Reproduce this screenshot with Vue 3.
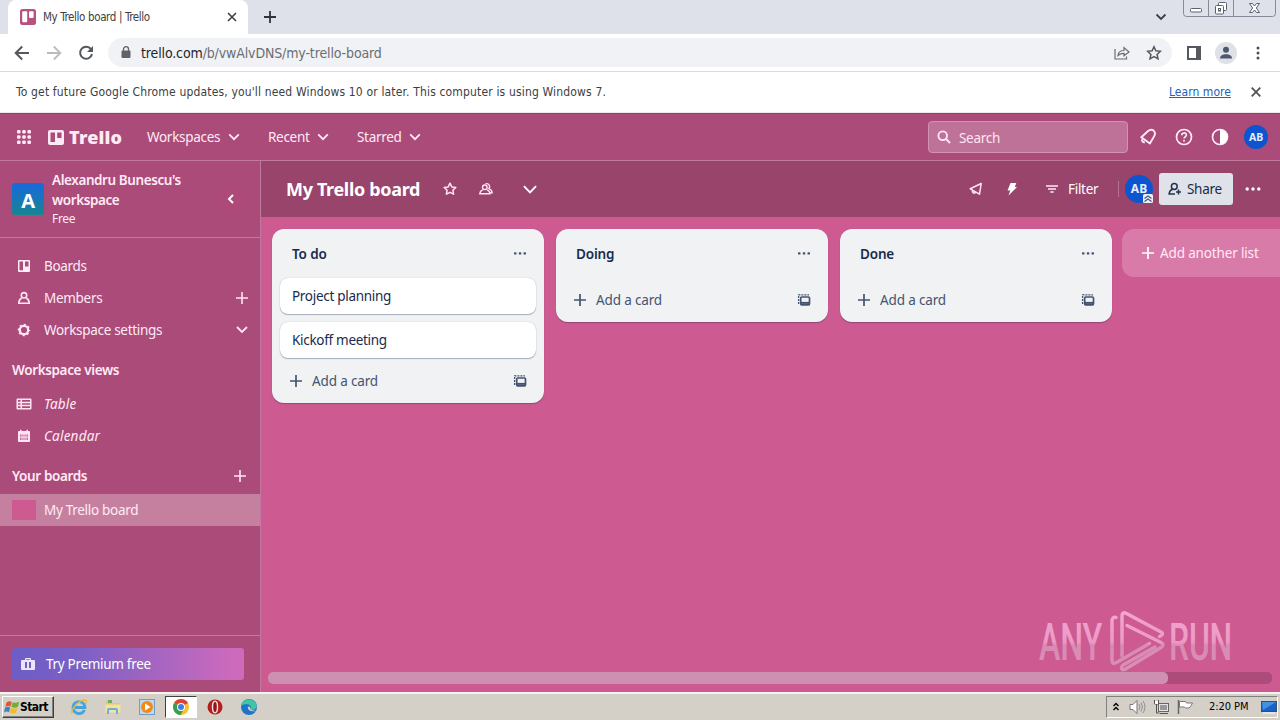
<script setup>
import { ref } from 'vue'

const boardName = ref('My Trello board')
const search = ref('')

const menus = ref([
    { name: 'Workspaces', cls: 'm-work' },
    { name: 'Recent', cls: 'm-recent' },
    { name: 'Starred', cls: 'm-starred' }
])

const lists = ref([
    { name: 'To do', cards: ['Project planning', 'Kickoff meeting'] },
    { name: 'Doing', cards: [] },
    { name: 'Done', cards: [] }
])
</script>

<template>
    <div class="screen">
        <!-- browser tabs -->
        <div class="tabstrip">
            <div class="tab">
                <svg class="favicon" width="16" height="16" viewBox="0 0 16 16">
                    <rect width="16" height="16" rx="2.5" fill="#b5527f" />
                    <rect x="2.2" y="2.2" width="5" height="11" rx="1" fill="#fff" />
                    <rect x="9" y="2.2" width="4.6" height="6.8" rx="1" fill="#fff" />
                </svg>
                <span class="tab-title">{{ boardName }} | Trello</span>
                <svg width="10" height="10" viewBox="0 0 10 10" class="tab-close"><path d="M1 1l8 8M9 1l-8 8" stroke="#3c4043" stroke-width="1.6" /></svg>
            </div>
            <svg class="new-tab" width="12" height="12" viewBox="0 0 12 12"><path d="M6 0v12M0 6h12" stroke="#30343a" stroke-width="1.8" /></svg>
            <svg class="tab-search" width="12" height="8" viewBox="0 0 12 8"><path d="M1.5 1.5L6 6l4.500-4.500" fill="none" stroke="#3c4043" stroke-width="1.8" /></svg>
            <svg class="win-buttons" width="94" height="18" viewBox="0 0 94 18">
                <path d="M.5 0v13.500q0 3 3 3h86q3 0 3-3V0M25.500 0v16M50.500 0v16" fill="none" stroke="#858b98" />
                <rect x="7.500" y="8.500" width="11" height="3.500" rx="1" fill="#fff" stroke="#5c606b" />
                <rect x="35.500" y="2.500" width="8" height="8" rx="1" fill="#fff" stroke="#5c606b" />
                <rect x="32.500" y="5.500" width="8" height="8.500" rx="1" fill="#fff" stroke="#5c606b" />
                <rect x="35.500" y="8.500" width="2" height="2.500" fill="none" stroke="#5c606b" />
                <path d="M66.500 3.500h3l2 2.500 2-2.500h3l-3.200 4.500 3.200 4.500h-3l-2-2.500-2 2.500h-3l3.200-4.500z" fill="#fff" stroke="#5c606b" />
            </svg>
        </div>

        <!-- address bar -->
        <div class="toolbar">
            <svg class="nav-back" width="16" height="16" viewBox="0 0 16 16"><path d="M15 8H2M8.200 1.500L1.700 8l6.500 6.500" fill="none" stroke="#55595e" stroke-width="2" /></svg>
            <svg class="nav-fwd" width="16" height="16" viewBox="0 0 16 16"><path d="M1 8h13M7.800 1.500L14.300 8l-6.500 6.500" fill="none" stroke="#b9bbbe" stroke-width="1.800" /></svg>
            <svg class="nav-reload" width="16" height="16" viewBox="0 0 16 16"><path d="M13 4.200A6 6 0 1 0 14 9" fill="none" stroke="#55595e" stroke-width="2" /><path d="M15 1v6H9z" fill="#55595e" /></svg>
            <div class="omnibox">
                <svg width="10" height="13" viewBox="0 0 10 13"><rect x="0.500" y="4.500" width="9" height="7.500" rx="1" fill="#5f6368" /><path d="M2.500 5V3.200a2.500 2.500 0 0 1 5 0V5" fill="none" stroke="#5f6368" stroke-width="1.300" /></svg>
                <span class="url"><b>trello.com</b>/b/vwAlvDNS/my-trello-board</span>
                <svg class="share-page" width="16" height="14" viewBox="0 0 16 14"><path d="M1 3v10h11.500v-2.500M4 9.500c.3-3 2.500-5 6-5V1.500l5 4.500-5 3.800V7.300C7.500 7.200 5.500 8 4 9.500z" fill="none" stroke="#6a6e73" stroke-width="1.200" /></svg>
                <svg class="bookmark" width="16" height="16" viewBox="0 0 16 16"><path d="M8 1.700l1.900 4.100 4.500.5-3.300 3.100.9 4.500L8 11.600l-4 2.300.9-4.500-3.300-3.100 4.500-.5z" fill="none" stroke="#55595e" stroke-width="1.500" /></svg>
            </div>
            <svg class="side-panel" width="14" height="14" viewBox="0 0 14 14"><path d="M0 0h14v14H0zM2 2v10h7V2z" fill="#55595e" fill-rule="evenodd" /></svg>
            <svg class="profile" width="22" height="22" viewBox="0 0 22 22"><circle cx="11" cy="11" r="11" fill="#dee1e6" /><circle cx="11" cy="7.800" r="3" fill="#4d5773" /><path d="M5 16.500c0-3 3-4.300 6-4.300s6 1.300 6 4.300z" fill="#4d5773" /></svg>
            <svg class="kebab" width="4" height="14" viewBox="0 0 4 14"><g fill="#4b4f54"><circle cx="2" cy="2" r="1.500" /><circle cx="2" cy="7" r="1.500" /><circle cx="2" cy="12" r="1.500" /></g></svg>
        </div>

        <div class="infobar">
            <span class="info-text">To get future Google Chrome updates, you'll need Windows 10 or later. This computer is using Windows 7.</span>
            <a class="learn">Learn more</a>
            <svg width="10" height="10" viewBox="0 0 10 10"><path d="M.7.700l8.600 8.600M9.300.7L.7 9.300" stroke="#505458" stroke-width="1.800" /></svg>
        </div>

        <!-- trello header -->
        <header class="header">
            <svg class="apps" width="14" height="14" viewBox="0 0 14 14" fill="#ffeaf6">
                <template v-for="r in 3"><rect v-for="c in 3" :key="r + '-' + c" :x="(c - 1) * 5.2" :y="(r - 1) * 5.2" width="3.600" height="3.600" rx="1.100" /></template>
            </svg>
            <div class="logo">
                <svg width="16" height="15" viewBox="0 0 16 15"><path fill="#ffeaf6" fill-rule="evenodd" d="M2 0h12a2 2 0 0 1 2 2v11a2 2 0 0 1-2 2H2a2 2 0 0 1-2-2V2a2 2 0 0 1 2-2zM2.500 2.500v9.500H7V2.500zM9.200 2.500V8h4.300V2.500z" /></svg>
                <span>Trello</span>
            </div>
            <div v-for="m in menus" :key="m.name" class="menu" :class="m.cls">
                <span>{{ m.name }}</span>
                <svg width="12" height="8" viewBox="0 0 12 8"><path d="M1.200 1.300L6 6.200l4.800-4.900" /></svg>
            </div>
            <div class="search">
                <svg width="14" height="14" viewBox="0 0 14 14"><circle cx="5.700" cy="5.700" r="4.300" fill="none" stroke="#ffe5f3" stroke-width="1.900" /><path d="M9 9l4 4" stroke="#ffe5f3" stroke-width="2" /></svg>
                <input v-model="search" type="text" placeholder="Search" />
            </div>
            <svg class="bell" width="18" height="18" viewBox="0 0 18 18"><path d="M2.300 9.300L8.800 3.200q3-2.700 5.800-.600 2.400 2.300.6 5.500L10.900 15.500zM3 11.300q-.3 2.700 2.800 3.200" fill="none" stroke="#ffeaf6" stroke-width="1.900" stroke-linejoin="round" /></svg>
            <svg class="help" width="18" height="18" viewBox="0 0 18 18"><circle cx="9" cy="9" r="7.500" fill="none" stroke="#ffeaf6" stroke-width="1.700" /><path d="M6.700 7.200c0-3 4.700-3 4.700-.2 0 1.800-2.300 1.700-2.300 3.600" fill="none" stroke="#ffeaf6" stroke-width="1.600" /><circle cx="9" cy="12.700" r="1" fill="#ffeaf6" /></svg>
            <svg class="theme" width="18" height="18" viewBox="0 0 18 18"><circle cx="9" cy="9" r="7.500" fill="none" stroke="#ffeaf6" stroke-width="1.700" /><path d="M9 1.500a7.500 7.500 0 0 1 0 15z" fill="#fff" /></svg>
            <div class="avatar small">AB</div>
        </header>

        <div class="main">
            <aside class="sidebar">
                <div class="workspace">
                    <div class="ws-logo">A</div>
                    <div class="ws-name">
                        <b>Alexandru Bunescu's</b>
                        <b>workspace</b>
                        <span>Free</span>
                    </div>
                    <div class="collapse"><svg width="8" height="10" viewBox="0 0 8 10"><path d="M6 1L2 5l4 4" fill="none" stroke="#fff" stroke-width="2" /></svg></div>
                </div>
                <nav class="nav">
                    <div class="item">
                        <svg width="14" height="14" viewBox="0 0 14 14"><path fill="#ffeaf6" fill-rule="evenodd" d="M2 1h10a1 1 0 0 1 1 1v10a1 1 0 0 1-1 1H2a1 1 0 0 1-1-1V2a1 1 0 0 1 1-1zM2.500 2.500v8.800H6V2.500zM8 2.500v5h3.500v-5z" /></svg>
                        <span>Boards</span>
                    </div>
                    <div class="item">
                        <svg width="14" height="14" viewBox="0 0 14 14"><g fill="none" stroke="#ffe5f3" stroke-width="1.600"><circle cx="7" cy="4.300" r="2.700" /><path d="M4.700 7C2.500 8 1.900 9.500 1.800 12.200h10.400C12.100 9.500 11.500 8 9.300 7" /></g></svg>
                        <span>Members</span>
                        <svg class="end" width="12" height="12" viewBox="0 0 12 12"><path d="M6 0v12M0 6h12" stroke="#ffe5f3" stroke-width="1.600" /></svg>
                    </div>
                    <div class="item">
                        <svg width="14" height="14" viewBox="0 0 14 14"><g fill="none" stroke="#ffe5f3"><circle cx="7" cy="7" r="4.200" stroke-width="2.200" /><circle cx="7" cy="7" r="5.500" stroke-width="1.500" stroke-dasharray="2.160" stroke-dashoffset="1" /></g></svg>
                        <span>Workspace settings</span>
                        <svg class="end" width="12" height="8" viewBox="0 0 12 8"><path d="M1 1l5 5 5-5" fill="none" stroke="#ffe5f3" stroke-width="1.800" /></svg>
                    </div>
                </nav>
                <h3 class="views">Workspace views</h3>
                <div class="item italic">
                    <svg width="16" height="12" viewBox="0 0 16 12"><path fill="#ffe5f3" fill-rule="evenodd" d="M1.500.500h13a1 1 0 0 1 1 1v9a1 1 0 0 1-1 1h-13a1 1 0 0 1-1-1v-9a1 1 0 0 1 1-1zM2 2v1.700h2.500V2zM6 2v1.700h8V2zM2 5.200v1.600h2.500V5.200zM6 5.200v1.600h8V5.200zM2 8.300V10h2.500V8.300zM6 8.300V10h8V8.300z" /></svg>
                    <span>Table</span>
                </div>
                <div class="item italic">
                    <svg width="14" height="14" viewBox="0 0 14 14"><path d="M1 3q0-1 1-1h1V.800h1.500V2h5V.800H11V2h1q1 0 1 1v9q0 1-1 1H2q-1 0-1-1z" fill="#ffe5f3" /><path d="M3 5.500h8v5.500H3z" fill="#c56c9b" /><path d="M3 8.200h8M5 5.500V11M7 5.500V11M9 5.500V11" stroke="#ffe5f3" stroke-width=".9" /></svg>
                    <span>Calendar</span>
                </div>
                <div class="boards-head">
                    <h3>Your boards</h3>
                    <svg width="12" height="12" viewBox="0 0 12 12"><path d="M6 0v12M0 6h12" stroke="#ffe5f3" stroke-width="1.600" /></svg>
                </div>
                <div class="board-item"><i></i><span>{{ boardName }}</span></div>
                <div class="premium">
                    <button type="button">
                        <svg width="14" height="12" viewBox="0 0 14 12"><path fill="#ece5ff" fill-rule="evenodd" d="M4 2V1q0-1 1-1h4q1 0 1 1v1h3q1 0 1 1v8q0 1-1 1H1q-1 0-1-1V3q0-1 1-1zM5.300 1.200V2h3.400v-.8zM4 4v6h2V4zM8 4v6h2V4z" /></svg>
                        <span>Try Premium free</span>
                    </button>
                </div>
            </aside>

            <section class="board">
                <div class="board-head">
                    <h1>{{ boardName }}</h1>
                    <svg class="star" width="16" height="16" viewBox="0 0 16 16"><path d="M8 2.200l1.800 3.700 4 .5-2.900 2.800.7 4L8 11.300l-3.600 1.900.7-4-2.900-2.800 4-.5z" fill="none" stroke="#ffe5f3" stroke-width="1.500" stroke-linejoin="round" /></svg>
                    <svg class="people" width="16" height="16" viewBox="0 0 16 16"><g fill="none" stroke="#ffe5f3" stroke-width="1.400"><circle cx="6.800" cy="6.300" r="2.300" /><path d="M4.800 8.800c-2 .6-2.800 1.700-3 3.900h10.200c-.2-2.200-1-3.300-3-3.900M7.500 2.900c3.200-1.200 5.300 2 3.400 4.800 2 .8 3 2 3.200 4h-1.900" /></g></svg>
                    <svg class="view-toggle" width="14" height="9" viewBox="0 0 14 9"><path d="M.9 1.200L7 7.300l6.100-6.100" fill="none" stroke="#fff" stroke-width="1.900" /></svg>
                    <svg class="rocket" width="14" height="14" viewBox="0 0 14 14"><path d="M1.200 6.800L12.200 1.500 10.500 12.200zM3.500 8.800q-.6 2.500 3 2.200" fill="none" stroke="#ffe5f3" stroke-width="1.500" stroke-linejoin="round" /></svg>
                    <svg class="bolt" width="12" height="14" viewBox="0 0 12 14"><path d="M4.500 1h5.800L8.800 5H11L2.500 13.500 4.200 8.500H1.500z" fill="#fff" /></svg>
                    <svg class="filter-icon" width="12" height="8" viewBox="0 0 12 8"><path d="M0 1h12M2 4h8M4.300 7h3.400" stroke="#ffe5f3" stroke-width="1.500" /></svg>
                    <span class="filter">Filter</span>
                    <i class="divider"></i>
                    <div class="avatar">AB
                        <svg class="admin" width="10" height="9" viewBox="0 0 10 9"><rect width="10" height="9" rx="1.500" fill="#e9edf5" /><path d="M1.500 4.500L5 2l3.500 2.500M1.500 7.500L5 5l3.500 2.500" fill="none" stroke="#4b5878" stroke-width="1.200" /></svg>
                    </div>
                    <button class="share" type="button">
                        <svg width="14" height="14" viewBox="0 0 14 14"><g fill="none" stroke="#24344f" stroke-width="1.500"><circle cx="6.300" cy="4.500" r="2.900" /><path d="M4.500 7.200C2 8 1.300 9.500 1.100 12H7M10.500 7.500v5M8 10h5" /></g></svg>
                        <span>Share</span>
                    </button>
                    <svg class="more" width="16" height="4" viewBox="0 0 16 4" fill="#fff"><circle cx="2.200" cy="2" r="1.700" /><circle cx="8" cy="2" r="1.700" /><circle cx="13.800" cy="2" r="1.700" /></svg>
                </div>

                <div class="lists">
                    <div v-for="list in lists" :key="list.name" class="list">
                        <div class="list-head">
                            <h2>{{ list.name }}</h2>
                            <svg width="12" height="3" viewBox="0 0 12 3" fill="#44546f"><rect width="2.500" height="2.300" y=".3" rx=".6" /><rect x="4.800" width="2.500" height="2.300" y=".3" rx=".6" /><rect x="9.500" width="2.500" height="2.300" y=".3" rx=".6" /></svg>
                        </div>
                        <div class="cards">
                            <div v-for="card in list.cards" :key="card" class="card">{{ card }}</div>
                        </div>
                        <div class="add-card">
                            <svg width="12" height="12" viewBox="0 0 12 12"><path d="M6 0v12M0 6h12" stroke="#44546f" stroke-width="1.700" /></svg>
                            <span>Add a card</span>
                            <svg class="tpl" width="14" height="14" viewBox="0 0 14 14"><path d="M1.600 11V1.800H12" fill="none" stroke="#44546f" stroke-width="1.300" stroke-dasharray="2 1" /><rect x="3.700" y="4" width="8.800" height="7.800" rx="1" fill="none" stroke="#44546f" stroke-width="1.700" /><path d="M4 9.900h8.500" stroke="#44546f" stroke-width="2" /></svg>
                        </div>
                    </div>
                    <div class="add-list">
                        <svg width="12" height="12" viewBox="0 0 12 12"><path d="M6 0v12M0 6h12" stroke="#fff" stroke-width="1.700" /></svg>
                        <span>Add another list</span>
                    </div>
                </div>

                <div class="scrollbar"><div class="thumb"></div></div>

                <!-- recorder watermark -->
                <svg class="watermark" width="240" height="66" viewBox="0 0 240 66">
                    <defs>
                        <linearGradient id="wm" x1="0" y1="0" x2="0" y2="66" gradientUnits="userSpaceOnUse">
                            <stop offset="0" stop-color="#fbb3dc" />
                            <stop offset=".5" stop-color="#f2a5cf" />
                            <stop offset=".55" stop-color="#dc94ba" />
                            <stop offset="1" stop-color="#dc9bbd" />
                        </linearGradient>
                    </defs>
                    <g fill="url(#wm)" font-family="Roboto, sans-serif" font-size="52" font-weight="500">
                        <text x="4" y="51" textLength="63" lengthAdjust="spacingAndGlyphs">ANY</text>
                        <text x="134" y="51" textLength="63" lengthAdjust="spacingAndGlyphs">RUN</text>
                    </g>
                    <g fill="none" stroke="url(#wm)" stroke-width="3.500" stroke-linejoin="round" stroke-linecap="round">
                        <path d="M81 8.500q-4-.8-4 3.500v39q0 5 4.500 2.500L114.500 34.500" />
                        <path d="M87 47V7.500q0-5.500 4.500-3L126 23q3.500 2.200-1.500 4.500" />
                        <path d="M92 16.500L126 33.500q4 2.500 0 5L90.500 60q-4 2-4-1.500 0-1.500 2.500-3L120 38" />
                    </g>
                </svg>
            </section>
        </div>

        <!-- windows taskbar -->
        <footer class="taskbar">
            <div class="start">
                <svg width="16" height="16" viewBox="0 0 16 16"><path d="M2.500 3.500q3-2 5.200-.5L6.500 7.500q-2.500-1.300-5.200.3z" fill="#e3562c" /><path d="M8.500 3.300q3 1.300 6.800-.5L13.800 8q-3.500 1.500-6.500-.3z" fill="#72ad3b" /><path d="M1 8.700q2.700-1.600 5.200-.3L5 13.300q-2.500-1.500-5 .1z" fill="#3d80cc" /><path d="M7 8.700q3 1.500 6.500.3L12 13.800q-3 1.300-6.300-.3z" fill="#f2bd28" /></svg>
                <span>Start</span>
            </div>
            <div class="task"><svg width="18" height="18" viewBox="0 0 18 18"><path d="M14.500 12A6 6 0 1 1 15 9.500H5" fill="none" stroke="#43a5dc" stroke-width="2.800" /><path d="M2.500 15.500C-1 14 8 2 15 2c2.500.3 1.500 3 .5 4.300" fill="none" stroke="#e5b947" stroke-width="1.300" /></svg></div>
            <div class="task"><svg width="18" height="18" viewBox="0 0 18 18"><path d="M2 3h5l1 2h8v9H2z" fill="#e5c863" /><path d="M4 2h4v3H4z" fill="#6dac65" /><path d="M1.500 6.500h15v8h-15z" fill="#f3e3a0" /><path d="M4 16v-4q0-1 1-1h7q1 0 1 1v4" fill="none" stroke="#70add5" stroke-width="2" /></svg></div>
            <div class="task"><svg width="18" height="18" viewBox="0 0 18 18"><rect x="1.500" y="1.500" width="15" height="15" fill="#bfd9ec" stroke="#6c9ec6" /><circle cx="9" cy="9" r="6" fill="#f08a1c" /><path d="M7 5.500v7L12.500 9z" fill="#fff" /></svg></div>
            <div class="task active"><svg width="18" height="18" viewBox="0 0 18 18"><circle cx="9" cy="9" r="8" fill="#f5c22d" /><path d="M9 9L2.100 5A8 8 0 0 1 15.900 5z" fill="#dd4433" /><path d="M9 9L2.100 5A8 8 0 0 0 8.500 17L12 11z" fill="#379e50" /><circle cx="9" cy="9" r="4" fill="#fff" /><circle cx="9" cy="9" r="3" fill="#3f7fe0" /></svg></div>
            <div class="task"><svg width="18" height="18" viewBox="0 0 18 18"><circle cx="9" cy="9" r="7.500" fill="#b51d1d" /><ellipse cx="9" cy="9" rx="2.500" ry="5.700" fill="#8e1519" stroke="#f3dada" stroke-width="1.500" /></svg></div>
            <div class="task"><svg width="18" height="18" viewBox="0 0 18 18"><circle cx="9" cy="9" r="8" fill="#1d74c9" /><path d="M1.200 8C2 0 14 -1 16.800 7.500c.5 4-4 5-6.300 3.500 1-1.500.5-4.500-3-4.800C4.500 6 2.500 6.500 1.200 8z" fill="#3fc6a4" /><path d="M8 8.500c-1 3 2.500 6 8.500 4.300C12.500 13 10 11.500 10 9z" fill="#d4d0c8" /></svg></div>
            <div class="tray">
                <svg class="up" width="8" height="10" viewBox="0 0 8 10"><path d="M1.500 4l2.500-2.500 2.500 2.500M1.500 8l2.500-2.500 2.500 2.500" fill="none" stroke="#000" stroke-width="1.400" /></svg>
                <svg class="vol" width="17" height="16" viewBox="0 0 17 16"><path d="M1 5.500h3l4-4v13l-4-4H1z" fill="#fff" stroke="#777" /><path d="M10 5q2 3 0 6M12 3.500q3 4.500 0 9M14 2q4 6 0 12" fill="none" stroke="#909090" /></svg>
                <svg class="net" width="17" height="16" viewBox="0 0 17 16"><rect x="5.500" y="4.500" width="10" height="8" fill="#e4e4e4" stroke="#666" /><rect x="7" y="6" width="7" height="5" fill="#999" /><path d="M7 14.500h8M1.500 1v4h4V1M3.500 5v9h3" fill="none" stroke="#555" /><rect x="2" y="2" width="3" height="3" fill="#fff" /></svg>
                <svg class="flag" width="17" height="16" viewBox="0 0 17 16"><path d="M1.500 1v14" stroke="#666" stroke-width="1.500" /><path d="M2.500 2.500h6l1 1.500h6q-1 2.500-3.500 5H8.500L7.500 8h-5z" fill="#fff" stroke="#777" /></svg>
                <span class="clock">2:20 PM</span>
                <svg width="16" height="13" viewBox="0 0 16 13"><rect x=".5" y=".5" width="15" height="10" fill="#1763c3" stroke="#285188" /><path d="M1 1h14L2 9z" fill="#4291e3" /><path d="M2 12h12" stroke="#eee" stroke-width="1.500" /></svg>
            </div>
        </footer>
    </div>
</template>

<style>
body {
    overflow: hidden;
}
</style>

<style scoped>
.screen {
    width: 1280px;
    height: 720px;
    display: flex;
    flex-direction: column;
    overflow: hidden;
    font-family: "Noto Sans", sans-serif;
    font-size: 13.5px;
    line-height: 20px;
    letter-spacing: -0.3px;
    color: #fff;
    white-space: nowrap;
}

.screen * {
    box-sizing: border-box;
}

svg {
    flex: none;
    display: block;
}

h1, h2, h3 {
    margin: 0;
}

button {
    border: 0;
    font-family: inherit;
    font-size: inherit;
    letter-spacing: inherit;
}

.tabstrip {
    height: 34px;
    flex: none;
    display: flex;
    background: #dee1e9;
    padding-left: 8px;
}

.tab {
    width: 240px;
    height: 34px;
    display: flex;
    align-items: center;
    background: #fff;
    border-radius: 8px 8px 0 0;
    padding: 0 11px 0 12px;
    color: #3c4043;
    font: 11.5px/16px "DejaVu Sans Condensed", sans-serif;
}

.tab-title {
    margin-left: 7px;
    letter-spacing: -0.37px;
}

.tab-close {
    margin-left: auto;
}

.new-tab {
    margin: 11px 0 0 16px;
}

.tab-search {
    margin: 13px 16px 0 auto;
}

.win-buttons {
    margin-right: 3px;
}

.toolbar {
    height: 38px;
    flex: none;
    display: flex;
    align-items: center;
    background: #fff;
    border-bottom: 1px solid #d9dbde;
    padding-left: 14px;
}

.nav-fwd, .nav-reload {
    margin-left: 16px;
}

.omnibox {
    width: 1064px;
    height: 29px;
    margin-left: 14px;
    display: flex;
    align-items: center;
    background: #f0f2f5;
    border-radius: 15px;
    padding: 0 10px 0 13px;
}

.url {
    margin-left: 10px;
    color: #6a6e73;
    font: 14px/20px "DejaVu Sans Condensed", sans-serif;
    letter-spacing: -0.13px;
}

.url b {
    font-weight: normal;
    color: #24272b;
}

.share-page {
    margin-left: auto;
}

.bookmark {
    margin-left: 16px;
}

.side-panel {
    margin-left: 15px;
}

.profile {
    margin-left: 14px;
}

.kebab {
    margin-left: 19px;
}

.infobar {
    height: 41px;
    flex: none;
    display: flex;
    align-items: center;
    background: #fff;
    border-bottom: 1px solid #f0e6ec;
    padding: 0 19px 0 16px;
    color: #3c4043;
    font: 12px/16px "DejaVu Sans Condensed", sans-serif;
}

.info-text {
    letter-spacing: 0.16px;
}

.learn {
    margin: 0 20px 0 auto;
    color: #2362b5;
    letter-spacing: 0.05px;
    text-decoration: underline;
}

.header {
    height: 48px;
    flex: none;
    display: flex;
    align-items: center;
    background: #ab4b79;
    border-top: 1px solid #8f4367;
    border-bottom: 1px solid #c279a0;
    padding-left: 17px;
    color: #ffeaf6;
}

.logo {
    width: 76px;
    margin-left: 17px;
    display: flex;
    align-items: center;
    gap: 5px;
    font-weight: 900;
    font-size: 18px;
    letter-spacing: 0.2px;
}

.menu {
    display: flex;
    align-items: center;
    justify-content: space-between;
}

.menu svg {
    fill: none;
    stroke: #ffeaf6;
    stroke-width: 1.8;
}

.m-work {
    width: 93px;
    margin-left: 23px;
}

.m-recent {
    width: 61px;
    margin-left: 28px;
}

.m-starred {
    width: 64px;
    margin-left: 28px;
}

.search {
    width: 200px;
    height: 32px;
    margin-left: auto;
    display: flex;
    align-items: center;
    background: #bf7297;
    border: 1px solid #d293b3;
    border-radius: 4px;
    padding-left: 8px;
}

.search input {
    width: 160px;
    margin-left: 8px;
    padding: 2px 0 0;
    border: 0;
    outline: 0;
    background: none;
    font: inherit;
    letter-spacing: inherit;
    color: #fff;
}

.search input::placeholder {
    color: #ffe5f3;
}

.bell {
    margin-left: 11px;
}

.help, .theme {
    margin-left: 18px;
}

.avatar {
    width: 28px;
    height: 28px;
    flex: none;
    position: relative;
    border-radius: 50%;
    background: #0c55cf;
    color: #e4eeff;
    font: bold 12px/28px "Noto Sans", sans-serif;
    letter-spacing: 0;
    text-align: center;
}

.avatar.small {
    width: 24px;
    height: 24px;
    margin: 0 12px 0 15px;
    font-size: 10.5px;
    line-height: 24px;
}

.admin {
    position: absolute;
    right: 0;
    bottom: 0;
}

.main {
    height: 531px;
    flex: none;
    display: flex;
}

.sidebar {
    width: 261px;
    flex: none;
    display: flex;
    flex-direction: column;
    background: #ab4b79;
    border-right: 1px solid #c279a0;
    color: #ffeaf6;
}

.workspace {
    height: 77px;
    display: flex;
    align-items: center;
    border-bottom: 1px solid #c279a0;
    padding-left: 12px;
}

.ws-logo {
    width: 32px;
    height: 32px;
    border-radius: 3px;
    background: linear-gradient(#1769df, #178590);
    color: #fff;
    font: bold 20px/36px "Noto Sans", sans-serif;
    text-align: center;
}

.ws-name {
    margin-left: 8px;
    display: flex;
    flex-direction: column;
}

.ws-name b {
    font-weight: 600;
    letter-spacing: -0.42px;
}

.ws-name span {
    font-size: 12px;
    line-height: 18px;
}

.collapse {
    width: 28px;
    height: 28px;
    display: flex;
    align-items: center;
    justify-content: center;
    margin: 0 15px 0 auto;
    background: #ae4a7a;
}

.nav {
    margin-top: 12px;
}

.item {
    height: 32px;
    display: flex;
    align-items: center;
    padding: 0 12px 0 17px;
}

.item span {
    margin-left: 13px;
}

.item .end {
    margin-left: auto;
}

.item.italic {
    font-style: italic;
    letter-spacing: 0.2px;
}

.item svg[width="16"] {
    margin: 0 -1px;
}

h3 {
    font-size: 13.5px;
    font-weight: 600;
    line-height: 20px;
    letter-spacing: -0.37px;
}

.views {
    margin: 14px 12px 8px;
}

.boards-head {
    height: 42px;
    display: flex;
    align-items: center;
    justify-content: space-between;
    padding: 6px 14px 0 12px;
}

.board-item {
    height: 32px;
    display: flex;
    align-items: center;
    background: #c6809f;
    padding-left: 12px;
}

.board-item i {
    width: 24px;
    height: 20px;
    margin-right: 8px;
    background: #cd5a91;
}

.premium {
    height: 57px;
    margin-top: auto;
    border-top: 1px solid #c279a0;
    padding: 12px;
}

.premium button {
    width: 232px;
    height: 32px;
    display: flex;
    align-items: center;
    padding: 0 9px;
    border-radius: 3px;
    color: #fff;
    background: linear-gradient(90deg, #6e5dc6, #7a60c5 28%, #cd6abc 95%);
}

.premium span {
    margin-left: 11px;
}

.board {
    width: 1019px;
    position: relative;
    overflow: hidden;
    background: #cd5a91;
}

.board-head {
    height: 56px;
    display: flex;
    align-items: center;
    background: #99446b;
    padding-left: 25px;
}

.board-head h1 {
    width: 134px;
    font-size: 18px;
    line-height: 24px;
    letter-spacing: -0.33px;
}

.star {
    margin-left: 22px;
}

.people {
    margin-left: 20px;
}

.view-toggle {
    margin-left: 29px;
}

.rocket {
    margin-left: auto;
}

.bolt {
    margin-left: 23px;
}

.filter-icon {
    margin-left: 28px;
}

.filter {
    width: 31px;
    margin-left: 10px;
}

.divider {
    width: 1px;
    height: 16px;
    margin: 0 6px 0 19px;
    background: #b77293;
}

.share {
    width: 74px;
    height: 32px;
    display: flex;
    align-items: center;
    gap: 5px;
    margin-left: 6px;
    padding: 0 9px;
    border-radius: 3px;
    background: #e0e2e9;
    color: #172b4d;
}

.more {
    margin: 0 19px 0 12px;
}

.lists {
    display: flex;
    align-items: flex-start;
    padding: 12px 0 0 11px;
}

.list {
    width: 272px;
    flex: none;
    margin-right: 12px;
    padding: 0 8px 7px;
    border-radius: 12px;
    background: #f1f2f4;
    box-shadow: 0 1px 1px rgba(9, 30, 66, 0.3);
    color: #172b4d;
}

.list-head {
    height: 49px;
    display: flex;
    align-items: center;
    justify-content: space-between;
    padding: 0 10px 0 12px;
}

h2 {
    font-size: 13.5px;
    font-weight: 600;
    letter-spacing: -0.15px;
}

.cards {
    display: flex;
    flex-direction: column;
    gap: 8px;
    padding-bottom: 8px;
}

.cards:empty {
    padding-bottom: 7px;
}

.card {
    height: 36px;
    padding: 8px 12px;
    border-radius: 8px;
    background: #fff;
    box-shadow: 0 1px 1px rgba(9, 30, 66, 0.3), 0 0 1px rgba(9, 30, 66, 0.3);
}

.add-card {
    height: 30px;
    display: flex;
    align-items: center;
    padding: 0 9px 0 10px;
    color: #44546f;
    letter-spacing: -0.15px;
}

.add-card span {
    margin-left: 10px;
}

.tpl {
    margin-left: auto;
}

.add-list {
    width: 272px;
    height: 48px;
    flex: none;
    display: flex;
    align-items: center;
    gap: 6px;
    margin-left: -2px;
    padding-left: 20px;
    border-radius: 12px;
    background: #d97ba8;
    color: #ffeaf6;
    letter-spacing: -0.15px;
}

.scrollbar {
    position: absolute;
    left: 7px;
    top: 511px;
    width: 1004px;
    height: 12px;
    border-radius: 5px;
    background: #ad4b7b;
}

.thumb {
    width: 900px;
    height: 12px;
    border-radius: 5px;
    background: #ce90b1;
}

.watermark {
    position: absolute;
    left: 774px;
    top: 448px;
    opacity: 0.85;
}

.taskbar {
    height: 28px;
    flex: none;
    display: flex;
    align-items: center;
    background: #d4d0c8;
    border-top: 2px solid #f5f3f1;
    padding: 0 2px;
    color: #000;
}

.start {
    width: 52px;
    height: 22px;
    display: flex;
    align-items: center;
    margin-right: 9px;
    border: 1px solid;
    border-color: #fff #404040 #404040 #fff;
    box-shadow: inset -1px -1px #808080;
    padding-left: 1px;
    font: bold 12px/14px "DejaVu Sans Condensed", sans-serif;
}

.start span {
    letter-spacing: -0.6px;
}

.task {
    width: 32px;
    height: 22px;
    margin-right: 2px;
    display: flex;
    align-items: center;
    justify-content: center;
}

.task.active {
    background: #fff;
    border: 1px solid;
    border-color: #404040 #fff #fff #404040;
}

.tray {
    width: 172px;
    height: 22px;
    display: flex;
    align-items: center;
    margin-left: auto;
    border: 1px solid;
    border-color: #808080 #fff #fff #808080;
    padding: 0 0 0 5px;
}

.vol {
    margin-left: 9px;
}

.net {
    margin-left: 7px;
}

.flag {
    margin-left: 7px;
}

.clock {
    width: 41px;
    margin: 0 11px 0 15px;
    font: 11px/14px "DejaVu Sans Condensed", sans-serif;
    letter-spacing: -0.05px;
}
</style>
